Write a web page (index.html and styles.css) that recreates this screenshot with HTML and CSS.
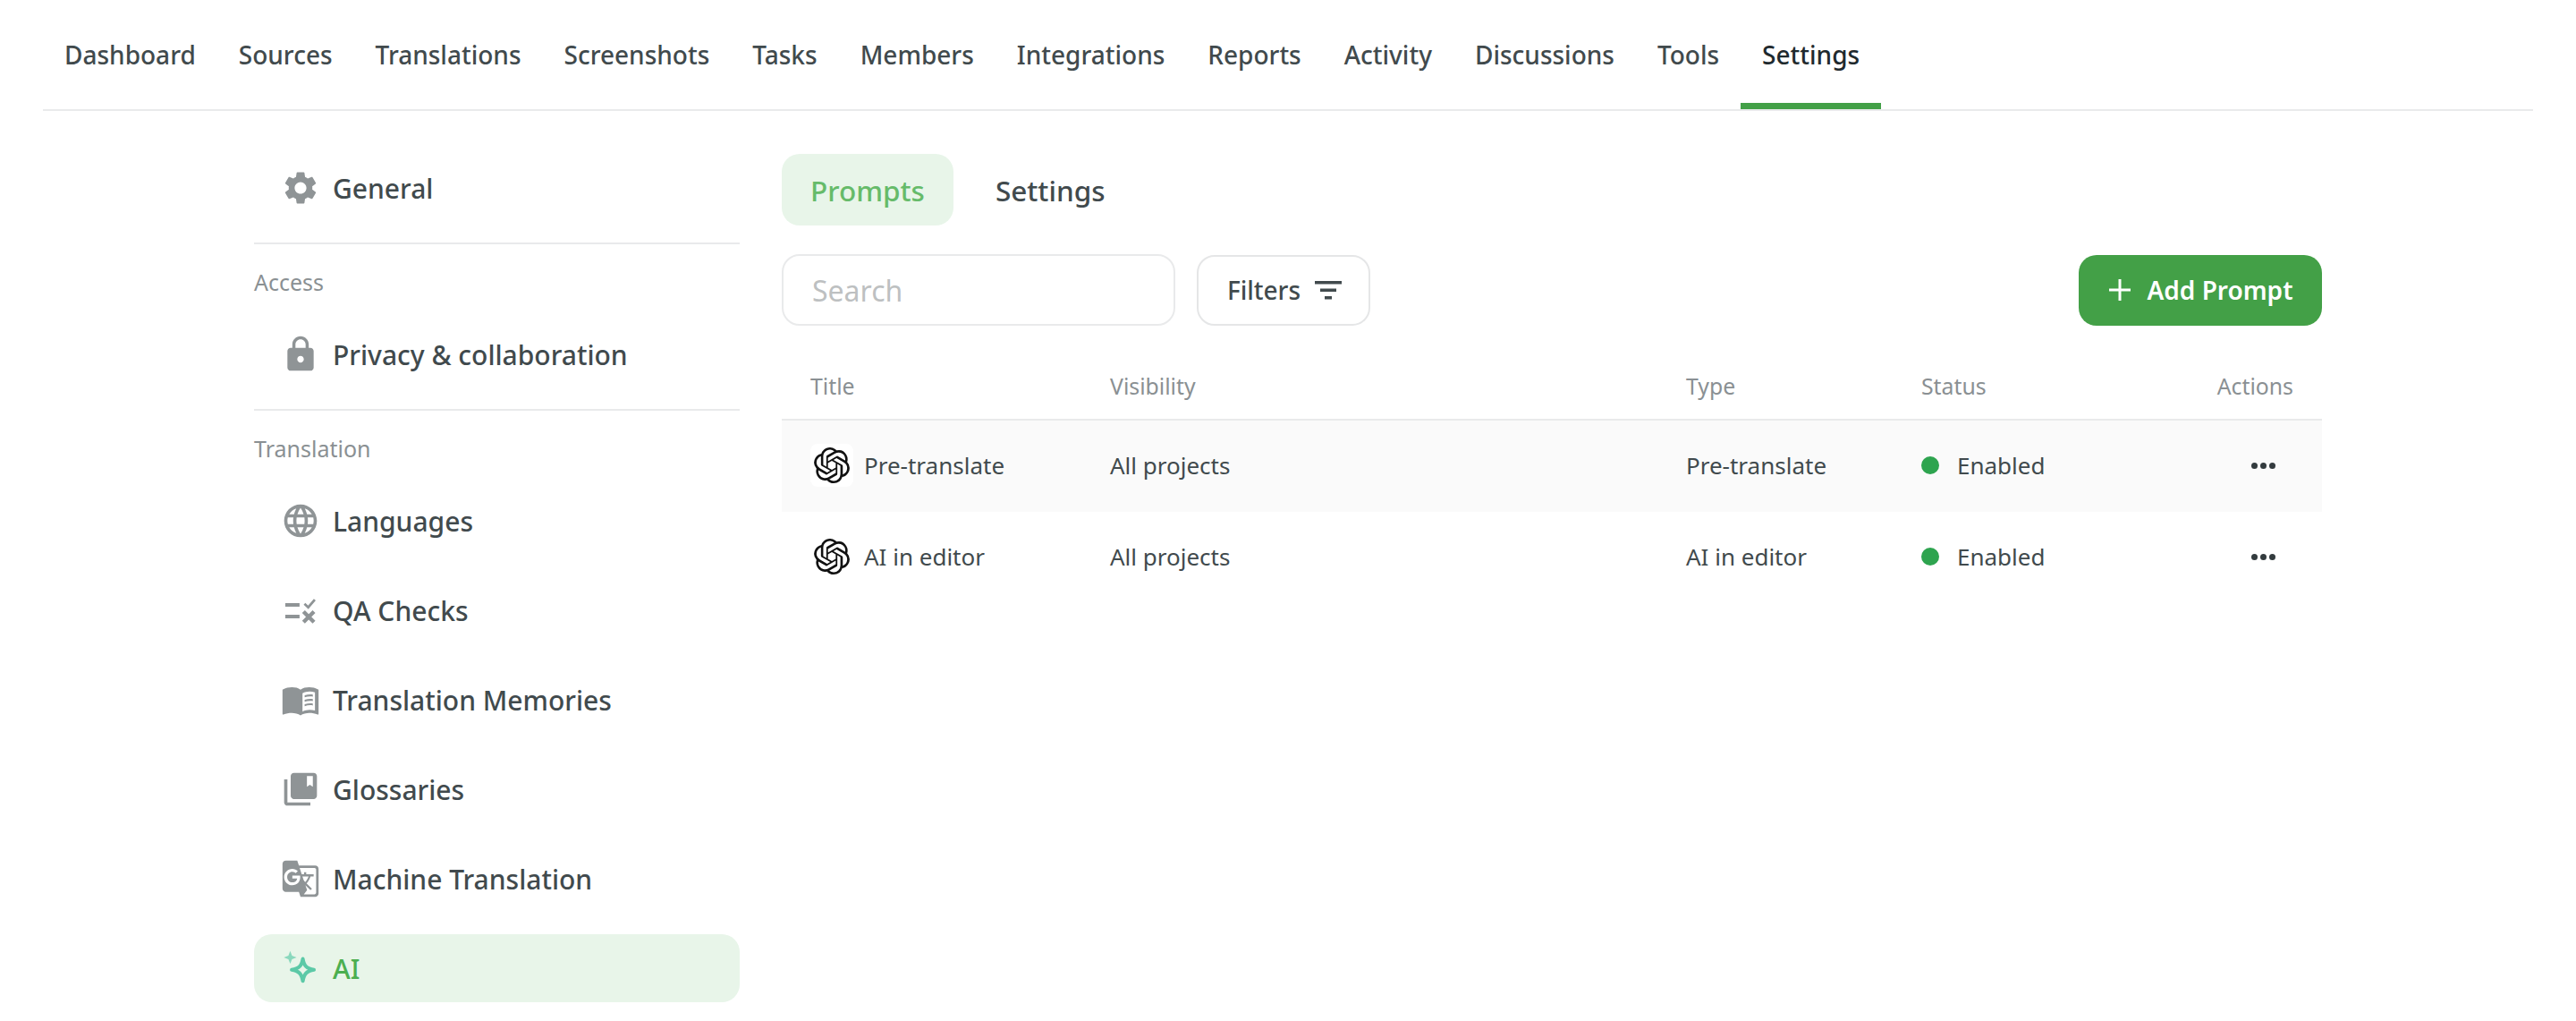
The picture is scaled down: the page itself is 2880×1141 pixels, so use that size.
FILE: index.html
```html
<!DOCTYPE html>
<html lang="en">
<head>
<meta charset="utf-8">
<title>Settings - AI</title>
<link rel="stylesheet" href="styles.css">
</head>
<body>
<svg class="defs" width="0" height="0" aria-hidden="true">
  <symbol id="openai" viewBox="0 0 24 24"><path d="M22.2819 9.8211a5.9847 5.9847 0 0 0-.5157-4.9108 6.0462 6.0462 0 0 0-6.5098-2.9A6.0651 6.0651 0 0 0 4.9807 4.1818a5.9847 5.9847 0 0 0-3.9977 2.9 6.0462 6.0462 0 0 0 .7427 7.0966 5.98 5.98 0 0 0 .511 4.9107 6.051 6.051 0 0 0 6.5146 2.9001A5.9847 5.9847 0 0 0 13.2599 24a6.0557 6.0557 0 0 0 5.7718-4.2058 5.9894 5.9894 0 0 0 3.9977-2.9001 6.0557 6.0557 0 0 0-.7475-7.0729zm-9.022 12.6081a4.4755 4.4755 0 0 1-2.8764-1.0408l.1419-.0804 4.7783-2.7582a.7948.7948 0 0 0 .3927-.6813v-6.7369l2.02 1.1686a.071.071 0 0 1 .038.052v5.5826a4.504 4.504 0 0 1-4.4945 4.4944zm-9.6607-4.1254a4.4708 4.4708 0 0 1-.5346-3.0137l.142.0852 4.783 2.7582a.7712.7712 0 0 0 .7806 0l5.8428-3.3685v2.3324a.0804.0804 0 0 1-.0332.0615L9.74 19.9502a4.4992 4.4992 0 0 1-6.1408-1.6464zM2.3408 7.8956a4.485 4.485 0 0 1 2.3655-1.9728V11.6a.7664.7664 0 0 0 .3879.6765l5.8144 3.3543-2.0201 1.1685a.0757.0757 0 0 1-.071 0l-4.8303-2.7865A4.504 4.504 0 0 1 2.3408 7.872zm16.5963 3.8558L13.1038 8.364 15.1192 7.2a.0757.0757 0 0 1 .071 0l4.8303 2.7913a4.4944 4.4944 0 0 1-.6765 8.1042v-5.6772a.79.79 0 0 0-.407-.667zm2.0107-3.0231l-.142-.0852-4.7735-2.7818a.7759.7759 0 0 0-.7854 0L9.409 9.2297V6.8974a.0662.0662 0 0 1 .0284-.0615l4.8303-2.7866a4.4992 4.4992 0 0 1 6.6802 4.66zM8.3065 12.863l-2.02-1.1638a.0804.0804 0 0 1-.038-.0567V6.0742a4.4992 4.4992 0 0 1 7.3757-3.4537l-.142.0805L8.704 5.459a.7948.7948 0 0 0-.3927.6813zm1.0976-2.3654l2.602-1.4998 2.6069 1.4998v2.9994l-2.5974 1.4997-2.6067-1.4997Z"/></symbol>
</svg>

<nav class="topnav">
  <a class="nav-item">Dashboard</a>
  <a class="nav-item">Sources</a>
  <a class="nav-item">Translations</a>
  <a class="nav-item">Screenshots</a>
  <a class="nav-item">Tasks</a>
  <a class="nav-item">Members</a>
  <a class="nav-item">Integrations</a>
  <a class="nav-item">Reports</a>
  <a class="nav-item">Activity</a>
  <a class="nav-item">Discussions</a>
  <a class="nav-item">Tools</a>
  <a class="nav-item nav-active">Settings</a>
</nav>

<div class="layout">
  <aside class="sidebar">
    <a class="side-item">
      <svg class="side-icon" viewBox="0 0 24 24"><path d="M19.14 12.94c.04-.3.06-.61.06-.94 0-.32-.02-.64-.07-.94l2.03-1.58c.18-.14.23-.41.12-.61l-1.92-3.32c-.12-.22-.37-.29-.59-.22l-2.39.96c-.5-.38-1.03-.7-1.62-.94l-.36-2.54c-.04-.24-.24-.41-.48-.41h-3.84c-.24 0-.43.17-.47.41l-.36 2.54c-.59.24-1.13.57-1.62.94l-2.39-.96c-.22-.08-.47 0-.59.22L2.74 8.87c-.12.21-.08.47.12.61l2.03 1.58c-.05.3-.09.63-.09.94s.02.64.07.94l-2.03 1.58c-.18.14-.23.41-.12.61l1.92 3.32c.12.22.37.29.59.22l2.39-.96c.5.38 1.03.7 1.62.94l.36 2.54c.05.24.24.41.48.41h3.84c.24 0 .44-.17.47-.41l.36-2.54c.59-.24 1.13-.56 1.62-.94l2.39.96c.22.08.47 0 .59-.22l1.92-3.32c.12-.22.07-.47-.12-.61l-2.01-1.58zM12 15.6c-1.98 0-3.6-1.62-3.6-3.6s1.62-3.6 3.6-3.6 3.6 1.62 3.6 3.6-1.62 3.6-3.6 3.6z"/></svg>
      <span>General</span>
    </a>
    <hr class="side-rule">
    <div class="side-label">Access</div>
    <a class="side-item">
      <svg class="side-icon" viewBox="0 0 24 24"><path d="M18 8h-1V6c0-2.76-2.24-5-5-5S7 3.24 7 6v2H6c-1.1 0-2 .9-2 2v10c0 1.1.9 2 2 2h12c1.1 0 2-.9 2-2V10c0-1.1-.9-2-2-2zm-6 9c-1.1 0-2-.9-2-2s.9-2 2-2 2 .9 2 2-.9 2-2 2zm3.1-9H8.9V6c0-1.71 1.39-3.1 3.1-3.1 1.71 0 3.1 1.39 3.1 3.1v2z"/></svg>
      <span>Privacy &amp; collaboration</span>
    </a>
    <hr class="side-rule">
    <div class="side-label">Translation</div>
    <div class="side-group">
      <a class="side-item">
        <svg class="side-icon" viewBox="0 0 24 24"><path d="M11.99 2C6.47 2 2 6.48 2 12s4.47 10 9.99 10C17.52 22 22 17.52 22 12S17.52 2 11.99 2zm6.93 6h-2.95c-.32-1.25-.78-2.45-1.38-3.56 1.84.63 3.37 1.91 4.33 3.56zM12 4.04c.83 1.2 1.48 2.53 1.91 3.96h-3.82c.43-1.43 1.08-2.76 1.91-3.96zM4.26 14C4.1 13.36 4 12.69 4 12s.1-1.36.26-2h3.38c-.08.66-.14 1.32-.14 2 0 .68.06 1.34.14 2H4.26zm.82 2h2.95c.32 1.25.78 2.45 1.38 3.56-1.84-.63-3.37-1.9-4.33-3.56zm2.95-8H5.08c.96-1.66 2.49-2.93 4.33-3.56C8.81 5.55 8.35 6.75 8.03 8zM12 19.96c-.83-1.2-1.48-2.53-1.91-3.96h3.82c-.43 1.43-1.08 2.76-1.91 3.96zM14.34 14H9.66c-.09-.66-.16-1.32-.16-2 0-.68.07-1.35.16-2h4.68c.09.65.16 1.32.16 2 0 .68-.07 1.34-.16 2zm.25 5.56c.6-1.11 1.06-2.31 1.38-3.56h2.95c-.96 1.65-2.49 2.93-4.33 3.56zM16.36 14c.08-.66.14-1.32.14-2 0-.68-.06-1.34-.14-2h3.38c.16.64.26 1.31.26 2s-.1 1.36-.26 2h-3.38z"/></svg>
        <span>Languages</span>
      </a>
      <a class="side-item">
        <svg class="side-icon" viewBox="0 0 24 24"><path d="M2.700 7.600h8.700v2.200H2.700zM2.700 14.700h8.700v2.200H2.700z"/><path class="stroke-2" d="M14.400 8l2.300 2.200 4-4.700"/><path class="stroke-3" d="M13.800 12.800l6.400 6.400M20.200 12.800l-6.400 6.400"/></svg>
        <span>QA Checks</span>
      </a>
      <a class="side-item">
        <svg class="side-icon" viewBox="0 0 24 24"><path d="M1 5.800C2.800 4.700 5 4.300 6.800 4.300c1.900 0 3.900.4 5.200 1.500 1.300-1.100 3.400-1.500 5.300-1.500 1.800 0 3.800.4 5.700 1.500v14.900c0 .3-.3.4-.6.3-1.500-.7-3.300-1-5.100-1-1.700 0-4 .6-5.300 1.500-1.300-.9-3.600-1.500-5.300-1.500-1.800 0-3.600.3-5.100 1-.3.1-.6 0-.6-.3zM13.200 7.500v11.700c1.300-.6 2.900-1 4.300-1 1.200 0 2.200.1 3.300.4V7.500c-1-.3-2.100-.5-3.300-.5-1.400 0-3 .4-4.300 1z"/><path d="M14.500 9.300c1.800-.6 3.800-.7 5-.4v1.200c-1.300-.3-3.300-.2-5 .4zM14.500 12c1.800-.6 3.800-.7 5-.4v1.200c-1.300-.3-3.300-.2-5 .4zM14.500 14.700c1.800-.6 3.800-.7 5-.4v1.200c-1.300-.3-3.300-.2-5 .4z"/></svg>
        <span>Translation Memories</span>
      </a>
      <a class="side-item">
        <svg class="side-icon" viewBox="0 0 24 24"><path d="M4 6H2v14c0 1.100.9 2 2 2h14v-2H4V6zm16-4H8c-1.100 0-2 .9-2 2v12c0 1.100.9 2 2 2h12c1.100 0 2-.9 2-2V4c0-1.100-.9-2-2-2zm-.500 8.500l-1.800-1.200-1.800 1.200V4h3.600v6.500z"/></svg>
        <span>Glossaries</span>
      </a>
      <a class="side-item">
        <svg class="side-icon" viewBox="0 0 24 24"><path d="M21 4H11l-1-3H3c-1.100 0-2 .9-2 2v15c0 1.100.9 2 2 2h8l1 3h9c1.100 0 2-.9 2-2V6c0-1.100-.9-2-2-2zM7 16c-2.760 0-5-2.240-5-5s2.240-5 5-5c1.350 0 2.480.5 3.350 1.300L9.030 8.570c-.38-.36-1.040-.78-2.030-.78-1.740 0-3.150 1.440-3.150 3.210S5.260 14.210 7 14.210c2.010 0 2.840-1.440 2.920-2.410H7v-1.710h4.680c.07.31.12.61.12 1.020C11.800 13.970 9.890 16 7 16zm6.170-5.420h3.700c-.43 1.250-1.110 2.430-2.050 3.470-.31-.35-.6-.72-.86-1.100l-.79-2.370zm8.330 9.920c0 .55-.45 1-1 1H14l2-2.500-1.040-3.100 3.100 3.100.92-.92-3.300-3.250.02-.02c1.130-1.250 1.930-2.690 2.400-4.220H20v-1.300h-4.530V8h-1.290v1.290h-1.440L11.460 5.500h9.040c.55 0 1 .45 1 1v14z"/></svg>
        <span>Machine Translation</span>
      </a>
      <a class="side-item side-active">
        <svg class="side-icon" viewBox="0 0 24 24"><path class="spark-small" d="M5.700 1.500l1.100 2.800 2.800 1.100-2.800 1.100-1.100 2.800-1.100-2.800-2.800-1.100 2.800-1.100z"/><path class="spark-big" d="M13.400 6.300c.8 4.400 2.300 5.900 6.800 6.700-4.500.8-6 2.300-6.800 6.800-.8-4.500-2.300-6-6.800-6.800 4.500-.8 6-2.300 6.800-6.700z"/></svg>
        <span>AI</span>
      </a>
    </div>
  </aside>

  <main class="content">
    <div class="tabs">
      <a class="tab tab-active">Prompts</a>
      <a class="tab">Settings</a>
    </div>
    <div class="toolbar">
      <div class="search">Search</div>
      <button class="filters">Filters
        <svg class="filter-icon" viewBox="0 0 30 22"><path d="M0 1h30v3.500H0zM6 9.500h18V13H6zM11 18h8v3.500h-8z"/></svg>
      </button>
      <button class="add">
        <svg class="plus-icon" viewBox="0 0 24 24"><path d="M10.500 0h3v10.500H24v3H13.500V24h-3V13.500H0v-3h10.500z"/></svg>
        Add Prompt
      </button>
    </div>
    <div class="table">
      <div class="row head">
        <div>Title</div><div>Visibility</div><div>Type</div><div>Status</div><div class="right">Actions</div>
      </div>
      <div class="row body-row hovered">
        <div class="title-cell"><span class="logo"><svg viewBox="0 0 24 24"><use href="#openai"/></svg></span>Pre-translate</div>
        <div>All projects</div>
        <div>Pre-translate</div>
        <div class="status"><i class="dot"></i>Enabled</div>
        <div class="more"><i></i><i></i><i></i></div>
      </div>
      <div class="row body-row">
        <div class="title-cell"><span class="logo"><svg viewBox="0 0 24 24"><use href="#openai"/></svg></span>AI in editor</div>
        <div>All projects</div>
        <div>AI in editor</div>
        <div class="status"><i class="dot"></i>Enabled</div>
        <div class="more"><i></i><i></i><i></i></div>
      </div>
    </div>
  </main>
</div>
</body>
</html>
```

FILE: styles.css
```css
* { box-sizing: border-box; }
html, body { margin: 0; padding: 0; height: 100%; overflow: hidden; background: #fff; }
body { font-family: "Noto Sans", sans-serif; color: #414a4d; }
.defs { position: absolute; }

.topnav { display: flex; height: 124px; margin: 0 48px; border-bottom: 2px solid #e9eaeb; }
.nav-item { display: flex; align-items: center; padding: 7px 24px 0; font-size: 28px; font-weight: 500; color: #414a4d; height: 122px; border-bottom: 7px solid transparent; }
.nav-active { color: #1f2a2e; border-bottom-color: #43a047; }

.layout { display: flex; gap: 47px; padding: 48px 284px 0; }
.sidebar { width: 543px; flex: none; }
.side-item { display: flex; align-items: center; gap: 14px; height: 76px; padding-left: 30px; font-size: 30px; font-weight: 500; color: #414a4d; border-radius: 20px; }
.side-icon { width: 44px; height: 44px; fill: #8f9496; flex: none; }
.stroke-2 { fill: none; stroke: #8f9496; stroke-width: 1.500; }
.stroke-3 { fill: none; stroke: #8f9496; stroke-width: 2.400; }
.side-rule { border: 0; height: 2px; background: #e9eaeb; margin: 23px 0 24px; }
.side-label { font-size: 25px; line-height: 36px; color: #8a9093; margin-bottom: 25px; }
.side-group { display: flex; flex-direction: column; gap: 24px; }
.side-active { background: #e8f5e9; color: #4caf50; }
.spark-small { fill: #8ad8bd; }
.spark-big { fill: none; stroke: #5cc9a7; stroke-width: 2.200; stroke-linejoin: round; }

.content { flex: 1; min-width: 0; }
.tabs { display: flex; height: 80px; }
.tab { display: flex; align-items: center; padding: 0 32px; font-size: 31.500px; font-weight: 500; color: #414a4d; border-radius: 20px; margin-right: 15px; }
.tab-active { background: #e8f5e9; color: #66bb6a; }

.toolbar { display: flex; align-items: center; margin-top: 32px; }
.search { width: 440px; height: 80px; border: 2px solid #e9eaeb; border-radius: 20px; padding-left: 32px; display: flex; align-items: center; font-size: 32px; color: #bdc0c1; }
.filters { margin-left: 24px; width: 194px; height: 79px; background: #fff; border: 2px solid #e5e6e7; border-radius: 20px; display: flex; align-items: center; justify-content: center; gap: 16px; font-family: inherit; font-size: 28px; font-weight: 500; color: #414a4d; padding: 0 0 0 2px; }
.filter-icon { width: 30px; height: 22px; fill: #414a4d; }
.add { margin-left: auto; width: 272px; height: 79px; background: #43a047; border: 0; border-radius: 20px; display: flex; align-items: center; justify-content: center; gap: 18px; font-family: inherit; font-size: 28px; font-weight: 600; color: #fff; padding: 0 0 0 2px; }
.plus-icon { width: 24px; height: 24px; fill: #fff; }

.table { margin-top: 32px; }
.row { display: grid; grid-template-columns: 335px 644px 263px 1fr 120px; align-items: center; padding: 0 32px; font-size: 26px; }
.head { height: 74px; font-size: 24.800px; color: #8a9093; border-bottom: 2px solid #e9eaeb; padding-bottom: 3px; }
.right { text-align: right; }
.body-row { height: 102px; padding-bottom: 2px; color: #414a4d; }
.hovered { background: #fafafa; }
.title-cell { display: flex; align-items: center; gap: 12px; }
.logo { width: 48px; height: 48px; background: #fff; border-radius: 8px; display: flex; align-items: center; justify-content: center; }
.logo svg { width: 40px; height: 40px; fill: #111; }
.status { display: flex; align-items: center; gap: 20px; }
.dot { width: 20px; height: 20px; border-radius: 50%; background: #2ea44f; }
.more { display: flex; justify-content: flex-end; gap: 3px; padding-right: 20px; }
.more i { width: 7px; height: 7px; border-radius: 50%; background: #333b3e; }
```
